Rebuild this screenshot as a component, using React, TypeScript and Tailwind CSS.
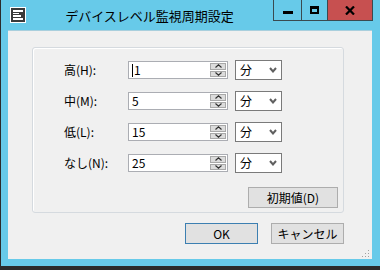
import React from "react"

const jp = { fontFamily: '"Noto Sans CJK JP", "Noto Sans", sans-serif' }

const rows = [
  { label: "高(H):", value: "1", caret: true },
  { label: "中(M):", value: "5" },
  { label: "低(L):", value: "15" },
  { label: "なし(N):", value: "25" },
]

function WinIcon() {
  return (
    <svg width="16" height="16" viewBox="0 0 16 16">
      <rect x="0" y="0" width="16" height="16" fill="#ffffff" />
      <rect x="1" y="1" width="14" height="14" fill="#3a3a3a" />
      <rect x="3" y="3" width="10" height="2" fill="#ffffff" />
      <rect x="3" y="6" width="6" height="1" fill="#ffffff" />
      <rect x="3" y="8" width="8" height="2" fill="#ffffff" />
      <rect x="3" y="11" width="10" height="2" fill="#ffffff" />
    </svg>
  )
}

function Spinner() {
  return (
    <div className="absolute right-[1px] top-[1px] bottom-[1px] w-[16px] flex flex-col gap-[1px] bg-white">
      <div className="flex-1 bg-[#dcdcdc] border border-[#a8a8a8] flex items-center justify-center">
        <svg width="7" height="4" viewBox="0 0 7 4">
          <path d="M0.5 3.5 L3.5 0.8 L6.5 3.5" fill="none" stroke="#303030" strokeWidth="1.2" />
        </svg>
      </div>
      <div className="flex-1 bg-[#dcdcdc] border border-[#a8a8a8] flex items-center justify-center">
        <svg width="7" height="4" viewBox="0 0 7 4">
          <path d="M0.5 0.5 L3.5 3.2 L6.5 0.5" fill="none" stroke="#303030" strokeWidth="1.2" />
        </svg>
      </div>
    </div>
  )
}

function Row({ label, value, caret }: { label: string; value: string; caret?: boolean }) {
  return (
    <div className="flex items-center h-[20px]">
      <div className="w-[64px] text-[12px] text-black leading-none">{label}</div>
      <div className="relative w-[100px] h-[18px] bg-white border border-[#abadb3] flex items-center pl-[3px] text-[12px] text-black leading-none">
        {caret && <span className="w-[1px] h-[13px] bg-black mr-[1px]"></span>}
        <span>{value}</span>
        <Spinner />
      </div>
      <div className="ml-[7px] w-[47px] h-[20px] bg-white border border-[#7a7a7a] flex items-center justify-between pl-[4px] pr-[4px] text-[12px] text-black leading-none">
        <span>分</span>
        <svg width="8" height="6" viewBox="0 0 8 6">
          <path d="M1 1 L4 4.5 L7 1" fill="none" stroke="#606060" strokeWidth="2" />
        </svg>
      </div>
    </div>
  )
}

export default function App() {
  return (
    <div className="w-[380px] h-[270px] bg-[#2b2b2b] pl-[1px] pb-[4px] flex select-none" style={jp}>
      <div className="flex-1 bg-[#67cae9] flex flex-col">
        {/* Title bar */}
        <div className="h-[30px] flex items-start">
          <div className="ml-[9px] mt-[7px]">
            <WinIcon />
          </div>
          <div className="flex-1 text-center text-[13px] text-black mt-[7px] leading-[18px]">
            デバイスレベル監視周期設定
          </div>
          <div className="flex mr-[7px] h-[21px]">
            <div className="w-[28px] border-l border-b border-[#3a4a50] flex items-center justify-center">
              <div className="w-[10px] h-[3px] bg-black mt-[5px]"></div>
            </div>
            <div className="w-[26px] border-l border-b border-[#3a4a50] flex items-center justify-center">
              <div className="w-[9px] h-[8px] border-black border-[2px] border-t-[3px]"></div>
            </div>
            <div className="w-[46px] border-l border-b border-r border-[#3a4a50] bg-[#c75050] flex items-center justify-center">
              <svg width="10" height="9" viewBox="0 0 10 9">
                <path d="M1 0.5 L9 8.5 M9 0.5 L1 8.5" stroke="#000" strokeWidth="2.2" />
              </svg>
            </div>
          </div>
        </div>

        {/* Client area */}
        <div className="relative ml-[7px] mr-[8px] h-[229px] bg-[#f0f0f0] border-t border-[#a9cfdd] pl-[24px] pt-[16px]">
          <div className="w-[312px] h-[166px] border border-[#d5dadf] rounded-[3px] shadow-[inset_1px_1px_0_#ffffff] flex flex-col pl-[31px] pt-[12px] pr-[5px]">
            <div className="flex flex-col gap-[11px]">
              {rows.map((r) => (
                <Row key={r.label} label={r.label} value={r.value} caret={r.caret} />
              ))}
            </div>
            <div className="flex justify-end mt-[14px]">
              <div className="w-[90px] h-[21px] bg-[#e1e1e1] border border-[#adadad] flex items-center justify-center text-[12px] text-black">
                初期値(D)
              </div>
            </div>
          </div>

          <div className="w-[312px] flex justify-end gap-[13px] mt-[10px]">
            <div className="w-[73px] h-[21px] bg-[#e1e1e1] border border-[#3c7fb1] flex items-center justify-center text-[12px] text-black">
              OK
            </div>
            <div className="w-[73px] h-[21px] bg-[#e1e1e1] border border-[#adadad] flex items-center justify-center text-[12px] text-black">
              キャンセル
            </div>
          </div>

          {/* resize grip */}
          <svg className="absolute right-[2px] bottom-[1px]" width="8" height="8" viewBox="0 0 8 8">
            <rect x="6" y="0" width="1" height="1" fill="#a0a0a0" />
            <rect x="3" y="3" width="1" height="1" fill="#a0a0a0" />
            <rect x="6" y="3" width="1" height="1" fill="#a0a0a0" />
            <rect x="0" y="6" width="1" height="1" fill="#a0a0a0" />
            <rect x="3" y="6" width="1" height="1" fill="#a0a0a0" />
            <rect x="6" y="6" width="1" height="1" fill="#a0a0a0" />
          </svg>
        </div>
      </div>
    </div>
  )
}
